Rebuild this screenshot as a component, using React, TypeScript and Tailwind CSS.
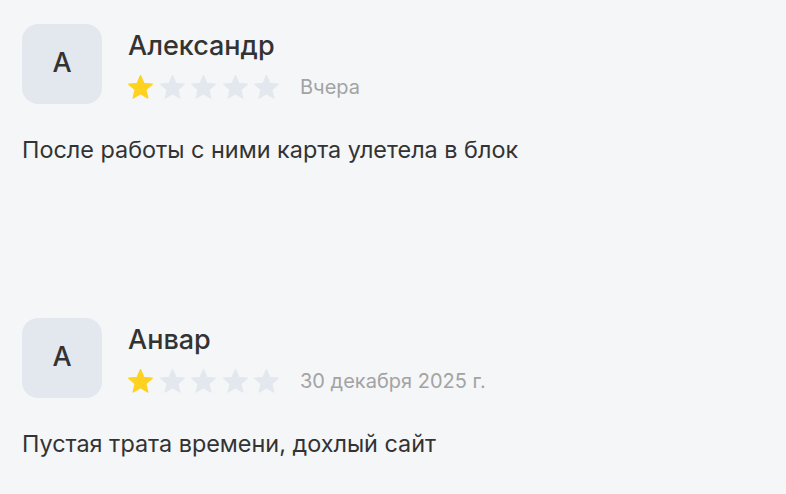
type Review = {
  id: number;
  author: string;
  rating: number;
  date: string;
  text: string;
};

const reviews: Review[] = [
  { id: 1, author: "Александр", rating: 1, date: "Вчера", text: "После работы с ними карта улетела в блок" },
  { id: 2, author: "Анвар", rating: 1, date: "30 декабря 2025 г.", text: "Пустая трата времени, дохлый сайт" },
];

// plump five-point star, fills its own box
const StarIcon = ({ filled }: { filled: boolean }) => (
  <svg width="25" height="24" viewBox="-0.8 -0.8 26.6 25.6" className="shrink-0">
    <polygon
      points="12.5,0 15.97,8.33 24.96,9.05 18.11,14.92 20.2,23.7 12.5,19 4.8,23.7 6.89,14.92 0.04,9.05 9.03,8.33"
      fill={filled ? "#ffd21f" : "#e3e8ef"}
      stroke={filled ? "#ffd21f" : "#e3e8ef"}
      strokeWidth="1.6"
      strokeLinejoin="round"
    />
  </svg>
);

const Stars = ({ value }: { value: number }) => (
  <div className="flex items-center gap-[6.5px]">
    {[1, 2, 3, 4, 5].map((i) => (
      <StarIcon key={i} filled={i <= value} />
    ))}
  </div>
);

const ReviewCard = ({ review }: { review: Review }) => (
  <div className="flex flex-col h-[294px] shrink-0">
    <div className="flex gap-[27px]">
      <div className="w-[80px] h-[80px] rounded-2xl bg-[#e3e8ef] flex items-center justify-center text-[27px] font-medium leading-none text-[#333333] pb-[3px]">
        {review.author[0]}
      </div>
      <div className="flex flex-col pt-[6px] -ml-px">
        <span className="text-[27px] font-medium leading-[32px] text-[#333333]">{review.author}</span>
        <div className="flex items-center gap-[21px] mt-[11px]">
          <Stars value={review.rating} />
          <span className="text-[20px] leading-[28px] text-[#a3a3a3]">{review.date}</span>
        </div>
      </div>
    </div>
    <p className="mt-[31px] text-[23.4px] leading-[30px] text-[#333333]">{review.text}</p>
  </div>
);

export default function App() {
  return (
    <div className="h-screen overflow-hidden bg-[#f5f6f8] px-[22px] pt-[24px] font-['Inter','Liberation_Sans',sans-serif]">
      {reviews.map((r) => (
        <ReviewCard key={r.id} review={r} />
      ))}
    </div>
  );
}
